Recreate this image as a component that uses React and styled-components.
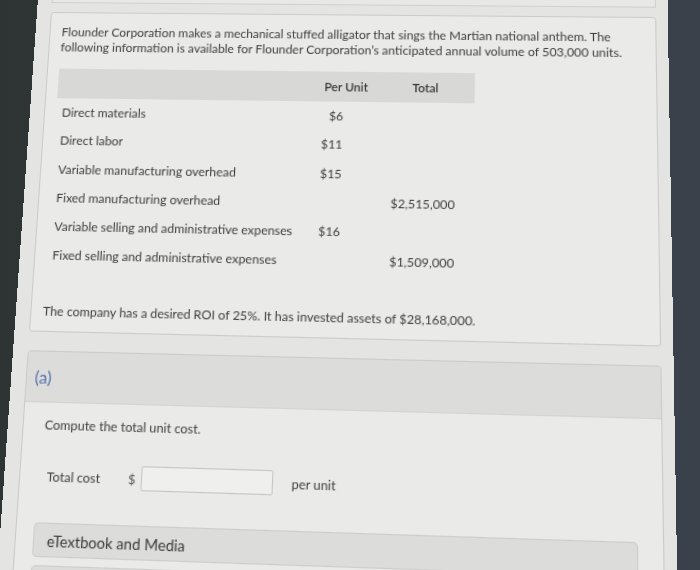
import React from 'react';
import styled, { createGlobalStyle } from 'styled-components';

const GlobalStyle = createGlobalStyle`
  html, body {
    margin: 0;
    padding: 0;
  }
  body {
    width: 700px;
    height: 570px;
    overflow: hidden;
    background: linear-gradient(90deg, #2e3433 0%, #343a3d 45%, #3b414b 100%);
    font-family: Lato, "Open Sans", sans-serif;
  }
`;

// the photo is taken at an angle, so the whole screen gets a keystone transform
const Screen = styled.div`
  width: 613px;
  height: 600px;
  box-sizing: border-box;
  padding: 0 11px 0 14px;
  background: #e4e5e2;
  color: #3e3e3e;
  display: flex;
  flex-direction: column;
  transform-origin: 0 0;
  transform: matrix3d(0.992738, 0.0076372, 0, -0.0000480327, -0.07546, 0.993525, 0, -0.000138028, 0, 0, 1, 0, 39.1198, -17.9701, 0, 1);
`;

const PrevCard = styled.div`
  height: 21px;
  flex-shrink: 0;
  box-sizing: border-box;
  border: 1px solid #d0d1ce;
  border-top: none;
  background: #e8e9e6;
`;

const Card = styled.div`
  width: 588px;
  box-sizing: border-box;
  margin-top: ${p => p.gap}px;
  border: 1px solid #cbccc9;
  border-radius: 3px;
  background: #eaebe8;
  flex-shrink: 0;
  ${p => p.grow && 'flex: 1;'}
`;

const Problem = styled.div`
  padding: 11px 12px 10px 11px;
`;

const Text = styled.p`
  margin: 0;
  font-size: 11.9px;
  line-height: 15.3px;
  max-width: 560px;
`;

const Table = styled.div`
  width: 404px;
  margin: 13.5px 0 31px;
`;

const Row = styled.div`
  display: grid;
  grid-template-columns: 243px 76px 85px;
  align-items: center;
  height: ${p => (p.head ? 29 : 27.2)}px;
  background: ${p => (p.head ? '#d8d9d6' : 'transparent')};
  font-size: 11.9px;
`;

const Label = styled.span`
  padding-left: 5.6px;
  white-space: nowrap;
`;

const HeadCell = styled.span`
  text-align: center;
  font-size: 11.6px;
  font-weight: 600;
  color: #383838;
  padding-right: ${p => p.pr || 0}px;
`;

const Value = styled.span`
  text-align: right;
  padding-right: ${p => p.pr}px;
`;

const PartHead = styled.div`
  height: 45px;
  display: flex;
  align-items: center;
  padding-left: 7.5px;
  background: #dcdddb;
  border-bottom: 1px solid #d3d4d1;
  font-size: 16px;
  color: #5872a8;
`;

const PartBody = styled.div`
  padding: 12px 22px 0 16px;
  display: flex;
  flex-direction: column;
`;

const Prompt = styled(Text)`
  margin-left: 4px;
`;

const Answer = styled.div`
  display: flex;
  align-items: center;
  height: 22px;
  margin: 27px 0 0 9px;
  font-size: 11.9px;
`;

const AnswerLabel = styled.span`
  width: 76px;
`;

const Dollar = styled.span`
  width: 12px;
  color: #555;
`;

const Input = styled.div`
  width: 122px;
  height: 22px;
  box-sizing: border-box;
  border: 1px solid #c6c7c4;
  border-radius: 2px;
  background: #eff0ed;
`;

const Unit = styled.span`
  margin-left: 17px;
`;

const Resource = styled.div`
  height: 30px;
  margin-top: ${p => p.gap}px;
  box-sizing: border-box;
  display: flex;
  align-items: center;
  padding-left: 12px;
  border: 1px solid #cdcecb;
  border-radius: 4px;
  background: #dcdddb;
  font-size: 13.7px;
  color: #3a3a3a;
`;

const rows = [
  ['Direct materials', '$6', ''],
  ['Direct labor', '$11', ''],
  ['Variable manufacturing overhead', '$15', ''],
  ['Fixed manufacturing overhead', '', '$2,515,000'],
  ['Variable selling and administrative expenses', '$16', ''],
  ['Fixed selling and administrative expenses', '', '$1,509,000'],
];

export default function App() {
  return (
    <>
      <GlobalStyle />
      <Screen>
        <PrevCard />
        <Card gap={9}>
          <Problem>
            <Text>
              Flounder Corporation makes a mechanical stuffed alligator that sings the Martian national anthem. The
              following information is available for Flounder Corporation’s anticipated annual volume of 503,000 units.
            </Text>
            <Table>
              <Row head>
                <span />
                <HeadCell>Per Unit</HeadCell>
                <HeadCell pr={9}>Total</HeadCell>
              </Row>
              {rows.map(([label, unit, total]) => (
                <Row key={label}>
                  <Label>{label}</Label>
                  <Value pr={40}>{unit}</Value>
                  <Value pr={17.6}>{total}</Value>
                </Row>
              ))}
            </Table>
            <Text>The company has a desired ROI of 25%. It has invested assets of $28,168,000.</Text>
          </Problem>
        </Card>
        <Card gap={17.4} grow>
          <PartHead>(a)</PartHead>
          <PartBody>
            <Prompt>Compute the total unit cost.</Prompt>
            <Answer>
              <AnswerLabel>Total cost</AnswerLabel>
              <Dollar>$</Dollar>
              <Input />
              <Unit>per unit</Unit>
            </Answer>
            <Resource gap={30}>eTextbook and Media</Resource>
            <Resource gap={7} />
          </PartBody>
        </Card>
      </Screen>
    </>
  );
}
